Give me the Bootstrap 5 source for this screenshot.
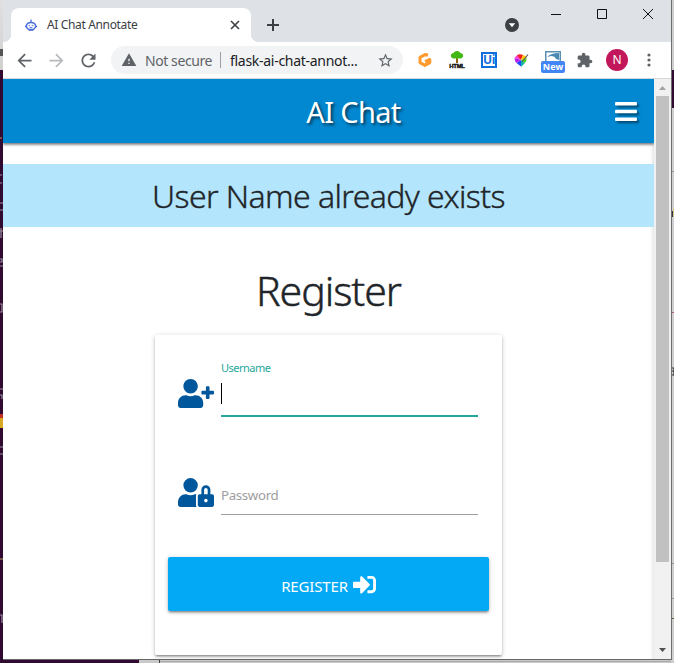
<!DOCTYPE html>
<html lang="en">
<head>
<meta charset="utf-8">
<meta name="viewport" content="width=device-width, initial-scale=1">
<title>AI Chat Annotate</title>
<link href="https://cdn.jsdelivr.net/npm/bootstrap@5.3.0/dist/css/bootstrap.min.css" rel="stylesheet">
<style>
  body{width:674px;height:663px;overflow:hidden;font-family:"Noto Sans","Open Sans",sans-serif;color:#212529;background:#300a31}
  svg{display:block;flex:none}
  /* desktop edges visible behind the browser */
  .desk{width:674px;height:663px;background:
    linear-gradient(#555,#555) 0 49px/3px 7px no-repeat,
    linear-gradient(#e0e0e0,#d0d0d0) 0 0/3px 70px no-repeat,
    linear-gradient(#c03020,#c03020) 0 414px/3px 4px no-repeat,
    linear-gradient(#d8a820,#d8a820) 0 418px/3px 10px no-repeat,
    linear-gradient(#300a31,#300a31) 672px 70px/2px 38px no-repeat,
    linear-gradient(#b06078,#b06078) 671px 312px/3px 1px no-repeat,
    linear-gradient(#999,#999) 671px 171px/3px 1px no-repeat,
    linear-gradient(#d8c870,#d8c870) 673px 209px/1px 8px no-repeat,
    linear-gradient(#303058,#303058) 671px 211px/2px 6px no-repeat,
    linear-gradient(#999,#999) 671px 563px/3px 1px no-repeat,
    linear-gradient(#999,#999) 671px 598px/3px 1px no-repeat,
    linear-gradient(#566b3c,#566b3c) 671px 618px/3px 1px no-repeat,
    linear-gradient(#cfcfcf,#cfcfcf) 671px 0/3px 663px no-repeat,
    linear-gradient(#444,#444) 159px 659px/1px 4px no-repeat,
    linear-gradient(#aaa,#aaa) 160px 661px/514px 1px no-repeat,
    linear-gradient(#c9c9c9,#c9c9c9) 139px 659px/535px 4px no-repeat,
    #300a31}
  .edge{position:absolute;top:0}
  .win{width:669px;height:660px;margin-left:3px;border-right:1px solid #6e6e6e;border-bottom:1px solid #666;background:#fff}
  .strip{height:42px;background:#dee1e6;padding-left:8px}
  .tab-on{width:240px;height:34px;background:#fff;border-radius:8px 8px 0 0;padding:0 10px 0 12px;font-size:12px;color:#3c4043;position:relative}
  .tab-on::before,.tab-on::after{content:"";position:absolute;bottom:0;width:8px;height:8px}
  .tab-on::before{left:-8px;background:radial-gradient(circle at 0 0,transparent 8px,#fff 8.5px)}
  .tab-on::after{right:-8px;background:radial-gradient(circle at 100% 0,transparent 8px,#fff 8.5px)}
  .tab-name{letter-spacing:-.35px}
  .plus{margin-left:15px;margin-top:18px}
  .drop{margin-top:18px;margin-right:14px}
  .ctl{width:46px;height:28px}
  .bar{height:37px;padding-left:6px;border-bottom:1px solid #d5d7da}
  .cell{width:32px;height:36px;display:flex;align-items:center;justify-content:center}
  .nav-ic{padding-right:1px}
  .omni{width:292px;height:28px;border-radius:14px;background:#f1f3f4;margin:0 6px;padding:0 9px 0 10px;font-size:14px;color:#202124}
  .omni-sep{width:1px;height:16px;background:#9aa0a6;margin:0 9px 0 8px}
  .insec{color:#5f6368;margin-left:8px;letter-spacing:-.42px}
  .url{letter-spacing:-.28px}
  .avatar{width:22px;height:22px;border-radius:50%;background:#c2185b;color:#fff;font-size:12px}
  .uibox{width:16px;height:16px;border:2px solid #0f6fdc;color:#0f6fdc;font:bold 12px/12px "Open Sans",sans-serif;letter-spacing:-.3px}
  .html-tag{font:900 6px/6px "Liberation Sans",sans-serif;color:#111;-webkit-text-stroke:.4px #111;letter-spacing:-.3px}
  .newtag{width:24px;height:12px;border-radius:2px;background:#4285f4;color:#fff;font:bold 9px/12px "Open Sans",sans-serif}
  .page{width:651px;height:580px;overflow:hidden;box-shadow:inset -5px 0 4px -4px #0002}
  .top{height:64px;background:#0288d1;box-shadow:0 1px 3px #0007,0 2px 2px #0003;padding-right:17px}
  .brand{font-size:29px;line-height:40px;color:#fff;text-shadow:2px 2px 3px #0009;padding-left:41px;padding-top:2px;letter-spacing:-.65px}
  .menu{filter:drop-shadow(2px 2px 1px #0007)}
  .notice{height:63px;margin-top:21px;background:#b3e5fc;font-size:32px;font-weight:300;letter-spacing:-.6px;-webkit-text-stroke:.35px #212529;padding-top:1px}
  .head{font-size:41px;line-height:58px;margin:34px 0 16px;font-weight:300;letter-spacing:-1.05px;-webkit-text-stroke:.45px #212529}
  .sheet{width:347px;height:320px;border:0;border-radius:2px;margin-left:152px;box-shadow:0 2px 2px 0 #0003,0 3px 1px -2px #0002,0 1px 5px 0 #0003;padding:25px 13px 0}
  .fieldrow{padding:0 11px 0 10px;height:99px}
  .fico{width:43px;padding-top:19px}
  .inp{width:257px;height:57px;border-bottom:2px solid #26a69a}
  .inp.idle{height:56px;border-bottom:1px solid #9e9e9e}
  .lab{font-size:11px;line-height:15px;color:#26a69a;letter-spacing:-.5px}
  .caret{width:1px;height:21px;background:#000;margin-top:8px}
  .ph{font-size:13.3px;line-height:20px;color:#9e9e9e;padding-top:26px;letter-spacing:-.35px}
  .go{height:54px;border-radius:2px;border:0;background:#03a9f4!important;color:#fff!important;font-size:15px;box-shadow:0 2px 2px 0 #0003,0 3px 1px -2px #0002,0 1px 5px 0 #0003;margin-top:-1px;gap:5px;letter-spacing:-.15px;padding:10px 0 5px}
  .go svg{margin-bottom:5px}
  .scroll{width:17px;height:580px;background:#f1f1f1;padding:0 2px}
  .thumb{height:466px;background:#c1c1c1}
</style>
<script src="https://cdn.jsdelivr.net/npm/bootstrap@5.3.0/dist/js/bootstrap.bundle.min.js"></script>
</head>
<body>
<div class="desk position-relative">
  <svg class="edge start-0" width="3" height="663" fill="none" stroke="#9b8fa0" stroke-width="1.2"><path d="M0 175h2M0 183h2M0 203h3M0 210h3M1 228v10M0 231h3M0 259h2v3H0M0 266h3M0 304h2v8H0M0 389h3M0 395h2v4M0 447h3M0 454h3M0 615h2v8"/><path d="M0 138h2M0 559h3" stroke="#b8a060"/></svg>
  <svg class="edge end-0" width="2" height="663" fill="none" stroke="#333" stroke-width="1.2"><path d="M0 368h2v7H0M0 371h2"/></svg>
  <div class="win position-relative">
    <div class="strip d-flex">
      <div class="tab-on d-flex align-items-center align-self-end">
        <svg width="16" height="16" viewBox="0 0 16 16" fill="none" stroke="#4a6fdc"><ellipse cx="8" cy="9" rx="4.600" ry="3.600" stroke-width="1.500"/><path d="M8 5V2.500M2 9.500h2M12 9.500h2M5.500 13.200h5" stroke-width="1.300"/><path d="M5.600 8.400h1.600M8.800 8.400h1.600M6.500 10.200q1.500 1 3 0" stroke-width=".9"/></svg>
        <span class="tab-name ms-2 flex-grow-1">AI Chat Annotate</span>
        <svg width="12" height="12" viewBox="0 0 12 12" stroke="#3c4043" stroke-width="1.600"><path d="M2 2l8 8M10 2l-8 8"/></svg>
      </div>
      <svg class="plus" width="14" height="14" viewBox="0 0 14 14" stroke="#3c4043" stroke-width="2"><path d="M7 1v12M1 7h12"/></svg>
      <svg class="drop ms-auto" width="14" height="14" viewBox="0 0 14 14"><circle cx="7" cy="7" r="7" fill="#3c4043"/><path d="M3.800 5.200h6.400L7 9.200z" fill="#fff"/></svg>
      <div class="d-flex">
        <svg class="ctl" viewBox="0 0 46 28" fill="none" stroke="#111"><path d="M18 14.500h10"/></svg>
        <svg class="ctl" viewBox="0 0 46 28" fill="none" stroke="#111"><path d="M18.500 9.500h9v9h-9z"/></svg>
        <svg class="ctl" viewBox="0 0 46 28" fill="none" stroke="#111"><path d="M18 9l10 10M28 9L18 19"/></svg>
      </div>
    </div>
    <div class="bar d-flex align-items-center">
      <div class="cell nav-ic"><svg width="21" height="21" viewBox="0 0 24 24" fill="#5f6368"><path d="M20 11H7.830l5.590-5.590L12 4l-8 8 8 8 1.410-1.410L7.830 13H20v-2z"/></svg></div>
      <div class="cell nav-ic"><svg width="21" height="21" viewBox="0 0 24 24" fill="#b9bcbe"><path d="M12 4l-1.410 1.410L16.170 11H4v2h12.170l-5.580 5.590L12 20l8-8z"/></svg></div>
      <div class="cell nav-ic"><svg width="21" height="21" viewBox="0 0 24 24" fill="#5f6368"><path d="M17.650 6.350C16.200 4.900 14.210 4 12 4c-4.420 0-7.990 3.580-7.990 8s3.570 8 7.990 8c3.730 0 6.840-2.550 7.730-6h-2.080c-.82 2.330-3.040 4-5.650 4-3.310 0-6-2.690-6-6s2.690-6 6-6c1.660 0 3.140.69 4.220 1.780L13 11h7V4l-2.350 2.350z"/></svg></div>
      <div class="omni d-flex align-items-center">
        <svg width="16" height="16" viewBox="0 0 24 24" fill="#5f6368"><path d="M1 21h22L12 2 1 21zm12-3h-2v-2h2v2zm0-4h-2v-4h2v4z"/></svg>
        <span class="insec text-nowrap">Not secure</span><span class="omni-sep"></span>
        <span class="url text-nowrap flex-grow-1">flask-ai-chat-annot...</span>
        <svg width="17" height="17" viewBox="0 0 24 24" fill="#5f6368"><path d="M22 9.240l-7.190-.62L12 2 9.190 8.630 2 9.240l5.460 4.730L5.820 21 12 17.270 18.180 21l-1.630-7.030L22 9.240zM12 15.400l-3.760 2.270 1-4.280-3.320-2.880 4.380-.38L12 6.100l1.710 4.040 4.380.38-3.320 2.880 1 4.280L12 15.400z"/></svg>
      </div>
      <div class="cell"><svg width="16" height="16" viewBox="0 0 16 16" fill="none" stroke="#ff9a2e" stroke-width="3" stroke-linejoin="round"><path d="M11 3.200L8.500 2.400 3 5.400v5.200L8 13.400l4.800-2.800V7.400L8 9.600"/></svg></div>
      <div class="cell flex-column">
        <svg width="16" height="12" viewBox="0 0 16 12"><path d="M7 5h2v7H7z" fill="#9a5c12"/><path d="M8 0c2 0 3 1 3.500 2C13.500 2.200 14.600 3.800 14 5.500 13.200 7.600 11 8 9 7.200L8 8.500 7 7.200C5 8 2.800 7.600 2 5.500 1.400 3.800 2.500 2.200 4.500 2 5 1 6 0 8 0z" fill="#43b814"/></svg>
        <span class="html-tag">HTML</span>
      </div>
      <div class="cell"><span class="uibox text-center">Ui</span></div>
      <div class="cell"><svg width="16" height="16" viewBox="0 0 16 16"><path d="M8 8L1.500 6q1-2 3.500-3z" fill="#ff3fd0"/><path d="M8 8L4 3q3-1.500 6 0z" fill="#f02020"/><path d="M8 8l2-5q3 .5 3.500 3z" fill="#ffc800"/><path d="M8 8l5.500-2q.5 3-1.500 5z" fill="#50d820"/><path d="M8 8l4 3-4 4z" fill="#0fb8a0"/><path d="M8 8v6.500L3.500 11z" fill="#1c48ff"/><path d="M8 8l-4.500 3Q1.500 9 1.500 6z" fill="#b51cf0"/><path d="M15 2.500L9 10" stroke="#555" stroke-width="1.200"/></svg></div>
      <div class="cell flex-column pt-1">
        <svg width="16" height="10" viewBox="0 0 16 10"><path d="M.75 10V.75h14.500V10" fill="#fff" stroke="#5b8fb4" stroke-width="1.500"/><path d="M2 6q4-4 12-4v7l-3-1q-1-3-5-3z" fill="#4a88b4"/></svg>
        <span class="newtag text-center">New</span>
      </div>
      <div class="cell"><svg width="16" height="16" viewBox="1 0 23 23" fill="#5f6368"><path d="M20.500 11H19V7c0-1.100-.9-2-2-2h-4V3.500C13 2.120 11.880 1 10.500 1S8 2.120 8 3.500V5H4c-1.100 0-1.990.9-1.990 2v3.800H3.500c1.490 0 2.700 1.210 2.700 2.700s-1.210 2.700-2.700 2.700H2V20c0 1.100.9 2 2 2h3.800v-1.500c0-1.490 1.210-2.700 2.700-2.700 1.490 0 2.700 1.210 2.700 2.700V22H17c1.100 0 2-.9 2-2v-4h1.500c1.380 0 2.500-1.120 2.500-2.500S21.880 11 20.500 11z"/></svg></div>
      <div class="cell"><span class="avatar d-flex align-items-center justify-content-center">N</span></div>
      <div class="cell"><svg width="4" height="14" viewBox="0 0 4 14" fill="#5f6368"><circle cx="2" cy="2" r="1.600"/><circle cx="2" cy="7" r="1.600"/><circle cx="2" cy="12" r="1.600"/></svg></div>
    </div>
    <div class="d-flex">
      <main class="page">
        <nav class="top d-flex align-items-center">
          <div class="brand flex-grow-1 text-center ms-5">AI Chat</div>
          <svg class="menu" width="22" height="25" viewBox="0 0 448 512" fill="#fff"><path d="M16 132h416c8.800 0 16-7.200 16-16V76c0-8.800-7.200-16-16-16H16C7.200 60 0 67.200 0 76v40c0 8.800 7.200 16 16 16zm0 160h416c8.800 0 16-7.200 16-16v-40c0-8.800-7.200-16-16-16H16c-8.800 0-16 7.200-16 16v40c0 8.800 7.200 16 16 16zm0 160h416c8.800 0 16-7.200 16-16v-40c0-8.800-7.200-16-16-16H16c-8.800 0-16 7.200-16 16v40c0 8.800 7.200 16 16 16z"/></svg>
        </nav>
        <div class="notice d-flex align-items-center justify-content-center">User Name already exists</div>
        <h1 class="head text-center">Register</h1>
        <form class="card sheet">
          <div class="fieldrow d-flex">
            <div class="fico"><svg width="36" height="29" viewBox="0 0 640 512" fill="#01579b"><path d="M624 208h-64v-64c0-8.800-7.200-16-16-16h-32c-8.800 0-16 7.200-16 16v64h-64c-8.800 0-16 7.200-16 16v32c0 8.800 7.200 16 16 16h64v64c0 8.800 7.200 16 16 16h32c8.800 0 16-7.200 16-16v-64h64c8.800 0 16-7.200 16-16v-32c0-8.800-7.200-16-16-16zm-400 48c70.700 0 128-57.300 128-128S294.700 0 224 0 96 57.300 96 128s57.300 128 128 128zm89.600 32h-16.700c-22.200 10.200-46.900 16-72.900 16s-50.600-5.800-72.900-16h-16.700C60.200 288 0 348.200 0 422.400V464c0 26.500 21.500 48 48 48h352c26.500 0 48-21.500 48-48v-41.600c0-74.200-60.200-134.400-134.400-134.400z"/></svg></div>
            <div class="inp"><div class="lab">Username</div><div class="caret"></div></div>
          </div>
          <div class="fieldrow d-flex">
            <div class="fico"><svg width="36" height="29" viewBox="0 0 640 512" fill="#01579b"><path d="M224 256A128 128 0 1 0 96 128a128 128 0 0 0 128 128zm96 64a63.080 63.080 0 0 1 8.100-30.500c-4.800-.5-9.500-1.500-14.500-1.500h-16.700a174.080 174.080 0 0 1-145.800 0h-16.700A134.430 134.430 0 0 0 0 422.400V464a48 48 0 0 0 48 48h280.900a63.540 63.540 0 0 1-8.900-32zm288-32h-32v-80a80 80 0 0 0-160 0v80h-32a32 32 0 0 0-32 32v160a32 32 0 0 0 32 32h224a32 32 0 0 0 32-32V320a32 32 0 0 0-32-32zM496 432a32 32 0 1 1 32-32 32 32 0 0 1-32 32zm32-144h-64v-80a32 32 0 0 1 64 0z"/></svg></div>
            <div class="inp idle"><div class="ph">Password</div></div>
          </div>
          <button type="button" class="btn go d-flex align-items-center justify-content-center">REGISTER
            <svg width="23" height="23" viewBox="0 0 512 512" fill="#fff"><path d="M416 448h-84c-6.600 0-12-5.400-12-12v-40c0-6.600 5.400-12 12-12h84c17.700 0 32-14.300 32-32V160c0-17.700-14.300-32-32-32h-84c-6.600 0-12-5.400-12-12V76c0-6.600 5.400-12 12-12h84c53 0 96 43 96 96v192c0 53-43 96-96 96zm-47-201L201 79c-15-15-41-4.500-41 17v96H24c-13.300 0-24 10.700-24 24v96c0 13.300 10.700 24 24 24h136v96c0 21.500 26 32 41 17l168-168c9.300-9.400 9.300-24.600 0-34z"/></svg>
          </button>
        </form>
      </main>
      <div class="scroll d-flex flex-column">
        <svg width="13" height="17" viewBox="0 0 13 17" fill="#a3a3a3"><path d="M3 11l3.500-4 3.500 4z"/></svg>
        <div class="thumb"></div>
        <svg class="mt-auto" width="13" height="17" viewBox="0 0 13 17" fill="#505050"><path d="M3 6l3.500 4L10 6z"/></svg>
      </div>
    </div>
  </div>
</div>
</body>
</html>
